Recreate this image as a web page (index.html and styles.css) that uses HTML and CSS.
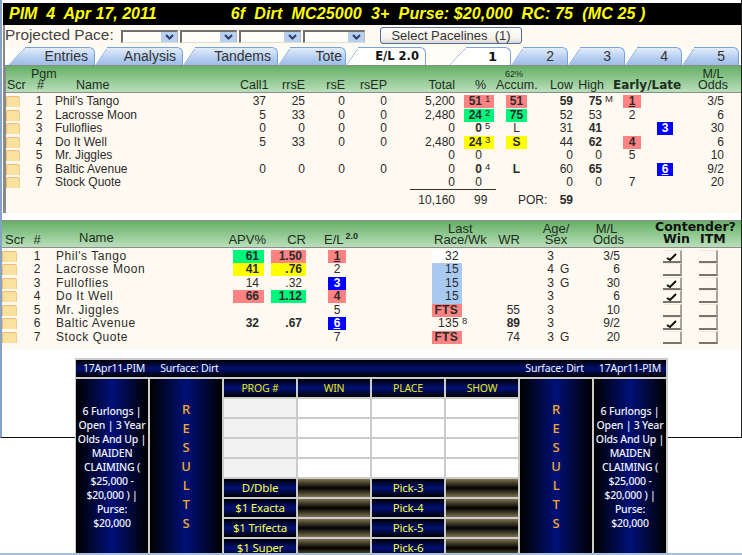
FILE: index.html
```html
<!DOCTYPE html>
<html>
<head>
    <meta charset="utf-8">
    <title>PIM 4 - E/L 2.0</title>
    <link rel="stylesheet" href="styles.css">
</head>
<body>
<div class="app">
	<div class="title">
		<span class="title-left">PIM&nbsp; 4&nbsp; Apr 17, 2011</span>
		<span class="title-right">6f&nbsp; Dirt&nbsp; MC25000&nbsp; 3+&nbsp; Purse: $20,000&nbsp; RC: 75&nbsp; (MC 25 )</span>
	</div>
	<div class="upper">
		<div class="pace">
			<span class="pace-label">Projected Pace:</span>
			<div class="sel sel-a"><i><svg width="11" height="8" viewBox="0 0 11 8"><path d="M2 2l3.5 3.5L9 2" fill="none" stroke="#27406e" stroke-width="2"/></svg></i></div>
			<div class="sel sel-a"><i><svg width="11" height="8" viewBox="0 0 11 8"><path d="M2 2l3.5 3.5L9 2" fill="none" stroke="#27406e" stroke-width="2"/></svg></i></div>
			<div class="sel sel-b"><i><svg width="11" height="8" viewBox="0 0 11 8"><path d="M2 2l3.5 3.5L9 2" fill="none" stroke="#27406e" stroke-width="2"/></svg></i></div>
			<div class="sel sel-b"><i><svg width="11" height="8" viewBox="0 0 11 8"><path d="M2 2l3.5 3.5L9 2" fill="none" stroke="#27406e" stroke-width="2"/></svg></i></div>
			<a class="pace-btn">Select Pacelines&nbsp; (1)</a>
		</div>
		<div class="tabs">
			<a class="tab wide t-entries"><span>Entries</span></a>
			<a class="tab t-analysis"><span>Analysis</span></a>
			<a class="tab t-tandems"><span>Tandems</span></a>
			<a class="tab t-tote"><span>Tote</span></a>
			<a class="tab active t-el"><span>E/L 2.0</span></a>
			<a class="tab wide active t-one"><span>1</span></a>
			<a class="tab t-num"><span>2</span></a>
			<a class="tab t-num"><span>3</span></a>
			<a class="tab t-num"><span>4</span></a>
			<a class="tab t-num"><span>5</span></a>
		</div>
		<div class="panel">
			<div class="head cols-a">
				<div class="scr-h">Scr</div>
				<div class="c pgm">Pgm<br>#</div>
				<div class="name-h">Name</div>
				<div class="r">Call1</div>
				<div class="r">rrsE</div>
				<div class="r">rsE</div>
				<div class="r">rsEP</div>
				<div class="r pr4">Total</div>
				<div class="pct-h">%</div>
				<div class="c accum"><small>62%</small><br>Accum.</div>
				<div class="r">Low</div>
				<div class="r">High</div>
				<div class="el-h">Early/Late</div>
				<div class="odds-h">M/L<br>Odds</div>
			</div>
			<div class="rows rows-a">
				<div class="row cols-a"><i class="scr"></i><div class="c">1</div><div class="name">Phil's Tango</div><div class="r">37</div><div class="r">25</div><div class="r">0</div><div class="r">0</div><div class="r pr4">5,200</div><div><b class="pct pink">51<sup>1</sup></b></div><div><b class="acc pink">51</b></div><div class="r b">59</div><div class="r b pr2">75<sup>M</sup></div><div><b class="early pink"><u>1</u></b></div><div></div><div class="r">3/5</div></div>
				<div class="row cols-a"><i class="scr"></i><div class="c">2</div><div class="name">Lacrosse Moon</div><div class="r">5</div><div class="r">33</div><div class="r">0</div><div class="r">0</div><div class="r pr4">2,480</div><div><b class="pct green">24<sup>2</sup></b></div><div><b class="acc green">75</b></div><div class="r">52</div><div class="r pr2">53</div><div><span class="early">2</span></div><div></div><div class="r">6</div></div>
				<div class="row cols-a"><i class="scr"></i><div class="c">3</div><div class="name">Fulloflies</div><div class="r">0</div><div class="r">0</div><div class="r">0</div><div class="r">0</div><div class="r pr4">0</div><div><b class="pct">0<sup>5</sup></b></div><div><span class="acc">L</span></div><div class="r">31</div><div class="r b pr2">41</div><div></div><div><b class="late blue">3</b></div><div class="r">30</div></div>
				<div class="row cols-a"><i class="scr"></i><div class="c">4</div><div class="name">Do It Well</div><div class="r">5</div><div class="r">33</div><div class="r">0</div><div class="r">0</div><div class="r pr4">2,480</div><div><b class="pct yellow">24<sup>3</sup></b></div><div><b class="acc yellow">S</b></div><div class="r">44</div><div class="r b pr2">62</div><div><b class="early pink">4</b></div><div></div><div class="r">6</div></div>
				<div class="row cols-a"><i class="scr"></i><div class="c">5</div><div class="name">Mr. Jiggles</div><div></div><div></div><div></div><div></div><div class="r pr4">0</div><div><span class="pct">0</span></div><div></div><div class="r">0</div><div class="r pr2">0</div><div><span class="early">5</span></div><div></div><div class="r">10</div></div>
				<div class="row cols-a"><i class="scr"></i><div class="c">6</div><div class="name">Baltic Avenue</div><div class="r">0</div><div class="r">0</div><div class="r">0</div><div class="r">0</div><div class="r pr4">0</div><div><b class="pct">0<sup>4</sup></b></div><div><b class="acc">L</b></div><div class="r">60</div><div class="r b pr2">65</div><div></div><div><b class="late blue"><u>6</u></b></div><div class="r">9/2</div></div>
				<div class="row cols-a"><i class="scr"></i><div class="c">7</div><div class="name">Stock Quote</div><div></div><div></div><div></div><div></div><div class="r pr4">0</div><div><span class="pct">0</span></div><div></div><div class="r">0</div><div class="r pr2">0</div><div><span class="early">7</span></div><div></div><div class="r">20</div></div>
				<div class="sum cols-a">
					<div></div><div></div><div></div><div></div><div></div><div></div><div></div>
					<div class="r pr4 sum-total">10,160</div>
					<div class="sum-pct">99</div>
					<div class="por">POR:</div>
					<div class="r b">59</div>
				</div>
			</div>
		</div>
	</div>
	<div class="panel lower">
		<div class="head head-b cols-b">
			<div class="scr-b">Scr</div>
			<div class="c">#</div>
			<div class="name-b">Name</div>
			<div class="r pr2">APV%</div>
			<div class="r pr4">CR</div>
			<div class="el-b">E/L<sup>2.0</sup></div>
			<div class="race-h"><span>Last<br>Race/Wk</span></div>
			<div class="r">WR</div>
			<div class="age-h">Age/<br>Sex</div>
			<div class="odds-b">M/L<br>Odds</div>
			<div class="cont-h">Contender?<br><span class="win-h">Win</span><span class="itm-h">ITM</span></div>
		</div>
		<div class="rows rows-b">
			<div class="row cols-b"><i class="scr"></i><div class="c">1</div><div class="name">Phil's Tango</div><div><b class="apv green">61</b></div><div><b class="crv pink">1.50</b></div><div><b class="elv pink"><u>1</u></b></div><div><span class="last white">32</span></div><div></div><div class="r pr2">3</div><div></div><div class="r">3/5</div><div><span class="chk win"><svg width="17" height="11" viewBox="0 0 17 11"><path d="M4 7l3 2 6-6" fill="none" stroke="#111" stroke-width="2"/></svg></span></div><div><span class="chk itm"></span></div></div>
			<div class="row cols-b"><i class="scr"></i><div class="c">2</div><div class="name">Lacrosse Moon</div><div><b class="apv yellow">41</b></div><div><b class="crv yellow">.76</b></div><div><span class="elv">2</span></div><div><span class="last sky">15</span></div><div></div><div class="r pr2">4</div><div class="sex">G</div><div class="r">6</div><div><span class="chk win"></span></div><div><span class="chk itm"></span></div></div>
			<div class="row cols-b"><i class="scr"></i><div class="c">3</div><div class="name">Fulloflies</div><div><span class="apv">14</span></div><div><span class="crv">.32</span></div><div><b class="elv blue">3</b></div><div><span class="last sky">15</span></div><div></div><div class="r pr2">3</div><div class="sex">G</div><div class="r">30</div><div><span class="chk win"><svg width="17" height="11" viewBox="0 0 17 11"><path d="M4 7l3 2 6-6" fill="none" stroke="#111" stroke-width="2"/></svg></span></div><div><span class="chk itm"></span></div></div>
			<div class="row cols-b"><i class="scr"></i><div class="c">4</div><div class="name">Do It Well</div><div><b class="apv pink">66</b></div><div><b class="crv green">1.12</b></div><div><b class="elv pink">4</b></div><div><span class="last sky">15</span></div><div></div><div class="r pr2">3</div><div></div><div class="r">6</div><div><span class="chk win"><svg width="17" height="11" viewBox="0 0 17 11"><path d="M4 7l3 2 6-6" fill="none" stroke="#111" stroke-width="2"/></svg></span></div><div><span class="chk itm"></span></div></div>
			<div class="row cols-b"><i class="scr"></i><div class="c">5</div><div class="name">Mr. Jiggles</div><div></div><div></div><div><span class="elv">5</span></div><div><b class="last pink fts">FTS</b></div><div class="r">55</div><div class="r pr2">3</div><div></div><div class="r">10</div><div><span class="chk win"></span></div><div><span class="chk itm"></span></div></div>
			<div class="row cols-b"><i class="scr"></i><div class="c">6</div><div class="name">Baltic Avenue</div><div><b class="apv">32</b></div><div><b class="crv">.67</b></div><div><b class="elv blue"><u>6</u></b></div><div><span class="last">135<sup>8</sup></span></div><div class="r b">89</div><div class="r pr2">3</div><div></div><div class="r">9/2</div><div><span class="chk win"><svg width="17" height="11" viewBox="0 0 17 11"><path d="M4 7l3 2 6-6" fill="none" stroke="#111" stroke-width="2"/></svg></span></div><div><span class="chk itm"></span></div></div>
			<div class="row cols-b"><i class="scr"></i><div class="c">7</div><div class="name">Stock Quote</div><div></div><div></div><div><span class="elv">7</span></div><div><b class="last pink fts">FTS</b></div><div class="r">74</div><div class="r pr2">3</div><div class="sex">G</div><div class="r">20</div><div><span class="chk win"></span></div><div><span class="chk itm"></span></div></div>
		</div>
	</div>
</div>
<div class="bottom-line"></div>

<div class="board">
	<div class="board-title">
		<span>17Apr11-PIM</span><span>Surface: Dirt</span>
		<span class="push">Surface: Dirt</span><span>17Apr11-PIM</span>
	</div>
	<div class="board-grid">
		<div class="side info">6 Furlongs |<br>Open | 3 Year<br>Olds And Up |<br>MAIDEN<br>CLAIMING (<br>$25,000 -<br>$20,000 ) |<br>Purse:<br>$20,000</div>
		<div class="side results">R<br>E<br>S<br>U<br>L<br>T<br>S</div>
		<div class="lab">PROG #</div><div class="lab">WIN</div><div class="lab">PLACE</div><div class="lab">SHOW</div>
		<div class="side results col7">R<br>E<br>S<br>U<br>L<br>T<br>S</div>
		<div class="side info col8">6 Furlongs |<br>Open | 3 Year<br>Olds And Up |<br>MAIDEN<br>CLAIMING (<br>$25,000 -<br>$20,000 ) |<br>Purse:<br>$20,000</div>
		<div class="prog"></div><div class="cell"></div><div class="cell"></div><div class="cell"></div>
		<div class="prog"></div><div class="cell"></div><div class="cell"></div><div class="cell"></div>
		<div class="prog"></div><div class="cell"></div><div class="cell"></div><div class="cell"></div>
		<div class="prog"></div><div class="cell"></div><div class="cell"></div><div class="cell"></div>
		<div class="lab lab-y">D/Dble</div><div class="gold"></div><div class="lab lab-y">Pick-3</div><div class="gold"></div>
		<div class="lab lab-y">$1 Exacta</div><div class="gold"></div><div class="lab lab-y">Pick-4</div><div class="gold"></div>
		<div class="lab lab-y">$1 Trifecta</div><div class="gold"></div><div class="lab lab-y">Pick-5</div><div class="gold"></div>
		<div class="lab lab-y">$1 Super</div><div class="gold"></div><div class="lab lab-y">Pick-6</div><div class="gold"></div>
	</div>
</div>
</body>
</html>
```

FILE: styles.css
```css
html, body { margin: 0; padding: 0; background: #fff; }
body { position: relative; width: 742px; height: 555px; overflow: hidden; font-family: "Liberation Sans", Arial, sans-serif; font-size: 12px; color: #2b2b2b; }

.app { box-sizing: border-box; width: 742px; height: 438px; padding-top: 3px; border-left: 2px solid #86a3c6; border-right: 1px solid #222; border-bottom: 1px solid #111; }

/* black title bar */
.title { display: flex; height: 22px; margin-left: 1px; padding-left: 6px; background: #000; color: #ff0; font-size: 16px; line-height: 22px; font-weight: bold; font-style: italic; white-space: nowrap; }
.title-right { margin-left: 74px; letter-spacing: .13px; }

.upper { margin-left: 1px; border-left: 2px solid #8a8a8a; background: #fffaf1; }

/* pace row */
.pace { display: flex; align-items: flex-start; height: 22px; }
.pace-label { width: 116px; margin-left: 0; font-size: 15.4px; line-height: 20px; color: #444; white-space: nowrap; }
.sel { box-sizing: border-box; display: flex; justify-content: flex-end; height: 13px; margin: 5px 2px 0 0; border-top: 2px solid #707070; border-left: 2px solid #707070; border-right: 1px solid #bbb; border-bottom: 1px solid #ddd; background: #fffdf6; }
.sel i { display: flex; align-items: center; justify-content: center; width: 16px; background: #b9cfee; }
.sel-a { width: 57px; }
.sel-b { width: 62px; }
.pace-btn { box-sizing: border-box; width: 142px; height: 17px; margin: 2px 0 0 13px; border: 1px solid #4f7099; border-radius: 3px; background: linear-gradient(#fff, #f4f2ea 70%, #d9d7cf); font-size: 13px; line-height: 15px; text-align: center; color: #333; white-space: nowrap; }

/* tabs */
.tabs { display: flex; isolation: isolate; height: 18px; padding-left: 3px; background: #fffdf8; }
.tab { --slant: 12px; position: relative; box-sizing: border-box; height: 18px; margin-left: var(--slant); padding-right: 6px; border-top: 1px solid #7ba2d8; border-right: 1px solid #7ba2d8; border-radius: 0 6px 0 0; background: linear-gradient(#e3edfb, #b4cdf0 60%, #9dbde8); font-size: 14px; line-height: 17px; text-align: right; color: #333; }
.tab::before { content: ""; position: absolute; z-index: -1; top: -1px; bottom: 0; left: calc(0px - var(--slant)); width: calc(var(--slant) + 14px); border-top: 1px solid #7ba2d8; border-left: 1px solid #7ba2d8; border-radius: 5px 0 0 0; background: inherit; transform: skewX(-34deg); transform-origin: bottom left; }
.tab.wide { --slant: 17px; }
.tab.wide::before { transform: skewX(-43deg); }
.tab.active { background: #fff; font-weight: bold; color: #111; }
.t-entries { width: 70px; }
.t-analysis { width: 76px; }
.t-tandems { width: 83px; }
.t-tote { width: 56px; padding-right: 3px; }
.t-el { width: 68px; font-family: "DejaVu Sans", sans-serif; font-size: 11.5px; }
.t-one { width: 45px; margin-left: 40px; padding-right: 13px; font-family: "DejaVu Sans", sans-serif; font-size: 13px; }
.t-num { width: 45px; padding-right: 13px; }

/* panels */
.panel { border-left: 1px solid #8a8a8a; background: #fffaf1; }
.lower { margin-top: 7px; border-left: none; }
.head { box-sizing: border-box; align-items: end; height: 28px; padding-bottom: 2px; border-top: 1px solid #8d8d8d; border-bottom: 1px solid #8d8d8d; background: linear-gradient(#66b066, #b9dfba); font-size: 12.5px; line-height: 10.5px; color: #1d2e20; white-space: nowrap; }
.head-b { font-size: 13px; }
.head small { font-size: 9px; }
.head sup { position: absolute; margin: -4px 0 0 2px; font-size: 9px; line-height: 10px; font-weight: bold; }

.cols-a { display: grid; grid-template-columns: 22px 22px 190px 26px 39px 40px 42px 72px 37px 36px 41px 31px 46px 30px 44px 17px; }
.cols-b { display: grid; grid-template-columns: 24px 22px 172px 48px 42px 40px 120px 50px 36px 19px 45px 70px 51px; }

.rows-a { height: 120px; padding-top: 2px; box-sizing: border-box; }
.rows-b { height: 102px; padding-top: 1.5px; box-sizing: border-box; }
.row { height: 13.5px; line-height: 13px; white-space: nowrap; }
.row > div { min-width: 0; }

.c { text-align: center; }
.r { text-align: right; }
.b { font-weight: bold; }
.pr2 { padding-right: 2px; }
.pr4 { padding-right: 4px; }

.scr { display: block; box-sizing: border-box; width: 13px; height: 11px; margin-top: 1px; border: 1px solid #f2b877; border-width: 1px 0 0 1px; border-radius: 2px 2px 0 0; background: #f8e29d; box-shadow: 1px 0 0 #f6c98e; }
.rows-b .scr { width: 14px; }
.name { padding-left: 5px; }
.rows-b .name { padding-left: 8px; letter-spacing: .55px; }

.scr-h { padding-left: 1px; }
.scr-b { padding-left: 3px; }
.pgm { padding-left: 3px; }
.name-h { padding-left: 26px; }
.pct-h { padding-left: 16px; }
.el-h { grid-column: span 2; padding-left: 9px; font-family: "DejaVu Sans", sans-serif; font-weight: bold; font-size: 12px; }
.odds-h { grid-column: span 2; padding: 0 13px 0 18px; text-align: center; }

/* coloured value cells */
.pink { background: #ff8383; }
.green { background: #00f57c; }
.yellow { background: #ff0; }
.blue { background: #00f; color: #fff; }
.sky { background: #a8c9f0; }
.white { background: #fff; }

.pct, .acc, .early, .late, .apv, .crv, .elv, .last { display: block; height: 13px; }
.pct { width: 30px; margin-left: 5px; padding-right: 12px; box-sizing: border-box; text-align: right; }
.acc { width: 21px; margin-left: 10px; text-align: center; }
.early { width: 18px; margin-left: 19px; text-align: center; }
.late { width: 16px; margin-left: 7px; text-align: center; }
.apv { box-sizing: border-box; width: 31px; margin-left: 13px; padding-right: 5px; text-align: right; }
.crv { box-sizing: border-box; width: 35px; margin-left: 3px; padding-right: 4px; text-align: right; }
.elv { width: 18px; margin-left: 18px; text-align: center; }
.last { box-sizing: border-box; width: 30px; height: 13.5px; margin-left: 82px; padding-right: 3px; text-align: right; letter-spacing: .3px; }
.fts { padding-right: 4px; }
sup { position: absolute; margin: -1px 0 0 3px; font-size: 9.5px; line-height: 10px; font-weight: normal; }

.sum { height: 23px; margin-top: -.5px; }
.sum-total, .sum-pct { height: 21px; border-top: 1px solid #333; line-height: 21px; }
.sum-total { margin-left: 23px; }
.sum-pct { padding-left: 15px; }
.por { padding-left: 22px; line-height: 22px; white-space: nowrap; }
.sum .b { line-height: 22px; }

/* lower header */
.name-b { padding-left: 31px; padding-bottom: 2px; }
.el-b { padding-left: 14px; }
.race-h { padding-left: 84px; }
.race-h span { display: inline-block; text-align: center; }
.age-h { grid-column: span 2; padding: 0 4px 0 21px; text-align: center; }
.odds-b { padding-left: 18px; text-align: center; }
.cont-h { grid-column: span 2; padding-left: 35px; font-family: "DejaVu Sans", sans-serif; font-weight: bold; font-size: 12.5px; line-height: 12px; color: #111; }
.win-h { margin-left: 8px; }
.itm-h { margin-left: 10px; }
.sex { padding-left: 4px; }

/* check boxes */
.chk { display: block; box-sizing: border-box; width: 19px; height: 13px; border-top: 1px solid #eee9dc; border-right: 2px solid #a8a498; border-bottom: 2px solid #77746c; background: #fdf9ee; }
.chk svg { display: block; }
.win { margin-left: 43px; }
.itm { margin-left: 9px; }

.bottom-line { height: 2px; margin-top: 115px; background: #a8bfdb; }

/* results board, a window lying over the page */
.board { position: absolute; left: 75px; top: 358px; box-sizing: border-box; width: 593px; height: 195px; padding: 2px 2px 0 1px; overflow: hidden; background: #ccc; font-family: "Noto Sans", sans-serif; font-size: 10.5px; letter-spacing: -.2px; }
.board-title { display: flex; gap: 15px; height: 17px; margin-bottom: 2px; padding: 0 5px 0 7px; background: linear-gradient(#000 0, #001070 50%, #000 100%); line-height: 17px; color: #f4f4ff; }
.push { margin-left: auto; }
.board-grid { display: grid; grid-template-columns: repeat(8, 72px); grid-auto-rows: 18px; gap: 2px; }
.side { grid-row: 1 / span 9; background: linear-gradient(90deg, #000, #001078 50%, #000); text-align: center; white-space: nowrap; }
.col7 { grid-column: 7; }
.col8 { grid-column: 8; }
.info { padding-top: 25px; line-height: 14px; color: #f0f0ff; font-weight: 500; }
.results { padding-top: 21px; font-size: 13px; line-height: 19px; font-weight: 500; color: #f2ac2c; }
.lab { background: linear-gradient(#000, #001078 50%, #000); text-align: center; line-height: 18px; color: #e8e800; }
.lab-y { font-size: 11.5px; color: #ffff30; }
.prog { background: #f2f2f2; }
.cell { background: #fff; }
.gold { background: linear-gradient(#7e7450, #000 50%, #7e7450); }
```
